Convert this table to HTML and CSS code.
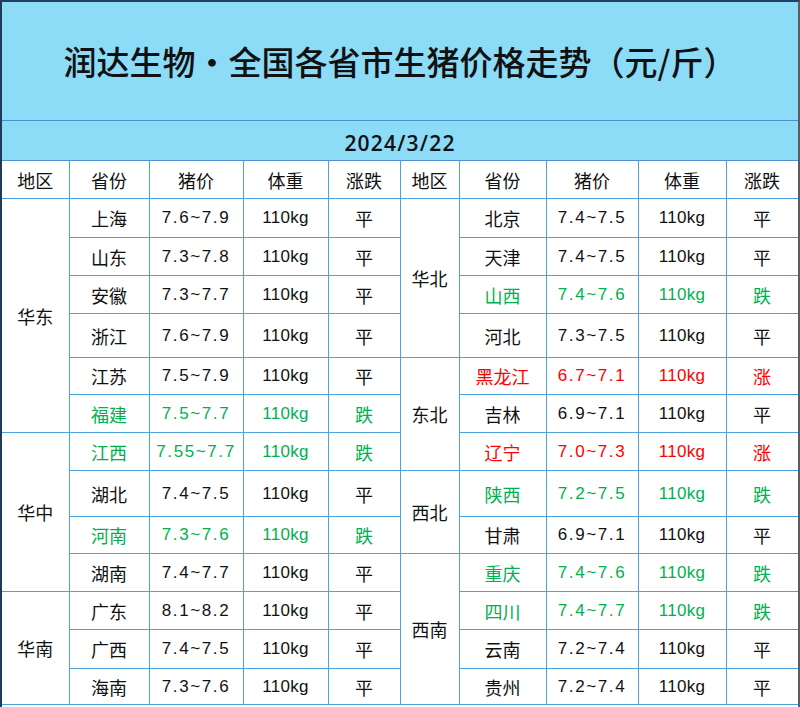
FILE: index.html
```html
<!DOCTYPE html>
<html lang="zh-CN">
<head>
<meta charset="utf-8">
<title>润达生物·全国各省市生猪价格走势</title>
<link rel="stylesheet" href="styles.css">
</head>
<body>
<div class="sheet">
  <div class="title">润达生物·全国各省市生猪价格走势（元/斤）</div>
  <div class="date">2024/3/22</div>
  <table class="grid">
    <colgroup>
      <col class="c1"><col class="c2"><col class="c3"><col class="c4"><col class="c5">
      <col class="c6"><col class="c7"><col class="c8"><col class="c9"><col class="c10">
    </colgroup>
    <tr class="h38 head">
      <td class="reg">地区</td><td>省份</td><td>猪价</td><td>体重</td><td>涨跌</td>
      <td class="reg2">地区</td><td>省份</td><td>猪价</td><td>体重</td><td>涨跌</td>
    </tr>
    <tr class="h39">
      <td class="reg" rowspan="6">华东</td><td>上海</td><td class="num">7.6~7.9</td><td class="kg">110kg</td><td>平</td>
      <td class="reg2" rowspan="4">华北</td><td>北京</td><td class="num">7.4~7.5</td><td class="kg">110kg</td><td>平</td>
    </tr>
    <tr class="h38">
      <td>山东</td><td class="num">7.3~7.8</td><td class="kg">110kg</td><td>平</td>
      <td>天津</td><td class="num">7.4~7.5</td><td class="kg">110kg</td><td>平</td>
    </tr>
    <tr class="h38">
      <td>安徽</td><td class="num">7.3~7.7</td><td class="kg">110kg</td><td>平</td>
      <td class="down">山西</td><td class="num down">7.4~7.6</td><td class="kg down">110kg</td><td class="down">跌</td>
    </tr>
    <tr class="h44">
      <td>浙江</td><td class="num">7.6~7.9</td><td class="kg">110kg</td><td>平</td>
      <td>河北</td><td class="num">7.3~7.5</td><td class="kg">110kg</td><td>平</td>
    </tr>
    <tr class="h37">
      <td>江苏</td><td class="num">7.5~7.9</td><td class="kg">110kg</td><td>平</td>
      <td class="reg2" rowspan="3">东北</td><td class="up">黑龙江</td><td class="num up">6.7~7.1</td><td class="kg up">110kg</td><td class="up">涨</td>
    </tr>
    <tr class="h38">
      <td class="down">福建</td><td class="num down">7.5~7.7</td><td class="kg down">110kg</td><td class="down">跌</td>
      <td>吉林</td><td class="num">6.9~7.1</td><td class="kg">110kg</td><td>平</td>
    </tr>
    <tr class="h38">
      <td class="reg" rowspan="4">华中</td><td class="down">江西</td><td class="num down">7.55~7.7</td><td class="kg down">110kg</td><td class="down">跌</td>
      <td class="up">辽宁</td><td class="num up">7.0~7.3</td><td class="kg up">110kg</td><td class="up">涨</td>
    </tr>
    <tr class="h46">
      <td>湖北</td><td class="num">7.4~7.5</td><td class="kg">110kg</td><td>平</td>
      <td class="reg2" rowspan="2">西北</td><td class="down">陕西</td><td class="num down">7.2~7.5</td><td class="kg down">110kg</td><td class="down">跌</td>
    </tr>
    <tr class="h37">
      <td class="down">河南</td><td class="num down">7.3~7.6</td><td class="kg down">110kg</td><td class="down">跌</td>
      <td>甘肃</td><td class="num">6.9~7.1</td><td class="kg">110kg</td><td>平</td>
    </tr>
    <tr class="h38">
      <td>湖南</td><td class="num">7.4~7.7</td><td class="kg">110kg</td><td>平</td>
      <td class="reg2" rowspan="4">西南</td><td class="down">重庆</td><td class="num down">7.4~7.6</td><td class="kg down">110kg</td><td class="down">跌</td>
    </tr>
    <tr class="h38">
      <td class="reg" rowspan="3">华南</td><td>广东</td><td class="num">8.1~8.2</td><td class="kg">110kg</td><td>平</td>
      <td class="down">四川</td><td class="num down">7.4~7.7</td><td class="kg down">110kg</td><td class="down">跌</td>
    </tr>
    <tr class="h39">
      <td>广西</td><td class="num">7.4~7.5</td><td class="kg">110kg</td><td>平</td>
      <td>云南</td><td class="num">7.2~7.4</td><td class="kg">110kg</td><td>平</td>
    </tr>
    <tr class="h36">
      <td>海南</td><td class="num">7.3~7.6</td><td class="kg">110kg</td><td>平</td>
      <td>贵州</td><td class="num">7.2~7.4</td><td class="kg">110kg</td><td>平</td>
    </tr>
  </table>
</div>
</body>
</html>
```

FILE: styles.css
```css
html, body {
  margin: 0;
  padding: 0;
  background: #ffffff;
}

body {
  font-family: "Liberation Sans", "Noto Sans CJK SC", sans-serif;
  color: #111111;
}

.sheet {
  width: 800px;
  height: 707px;
  box-sizing: border-box;
  border-top: 2px solid #23405f;
  border-left: 2px solid #1f3b5a;
  border-right: 2px solid #5c5c5c;
  overflow: hidden;
  background: #ffffff;
}

.title {
  height: 119px;
  box-sizing: border-box;
  background: #8cdbf7;
  border-bottom: 1px solid #4f8fcd;
  display: flex;
  align-items: center;
  justify-content: center;
  font-family: "Noto Sans CJK SC", sans-serif;
  font-size: 33px;
  font-weight: 500;
  padding-bottom: 1px;
}

.date {
  height: 39px;
  box-sizing: border-box;
  background: #8cdbf7;
  display: flex;
  align-items: center;
  justify-content: center;
  font-family: "Open Sans", "Liberation Sans", sans-serif;
  font-size: 21px;
  font-weight: 600;
  letter-spacing: 1.2px;
  padding-top: 4px;
}

.grid {
  width: 796px;
  border-collapse: collapse;
  table-layout: fixed;
  font-size: 18px;
}

.grid td {
  border: 1px solid #4aa3df;
  text-align: center;
  vertical-align: middle;
  padding: 0;
  white-space: nowrap;
  font-family: "Noto Sans CJK SC", sans-serif;
}

.grid td.reg {
  border-left: 0;
}

.grid tr:first-child td {
  border-top-color: #4f8fcd;
}

.c1 { width: 67px; }
.c2 { width: 80px; }
.c3 { width: 94px; }
.c4 { width: 85px; }
.c5 { width: 72px; }
.c6 { width: 59px; }
.c7 { width: 87px; }
.c8 { width: 92px; }
.c9 { width: 88px; }
.c10 { width: 72px; }

.h36 { height: 36px; }
.h37 { height: 37px; }
.h38 { height: 38px; }
.h39 { height: 39px; }
.h44 { height: 44px; }
.h46 { height: 46px; }

.grid td.num {
  font-family: "Liberation Sans", "Noto Sans CJK SC", sans-serif;
  font-size: 17px;
  letter-spacing: 1.6px;
}

.grid td.kg {
  font-family: "Liberation Sans", "Noto Sans CJK SC", sans-serif;
  font-size: 17px;
  letter-spacing: 0.3px;
}

.grid td.down {
  color: #00b050;
}

.grid td.up {
  color: #ff0000;
}
```
